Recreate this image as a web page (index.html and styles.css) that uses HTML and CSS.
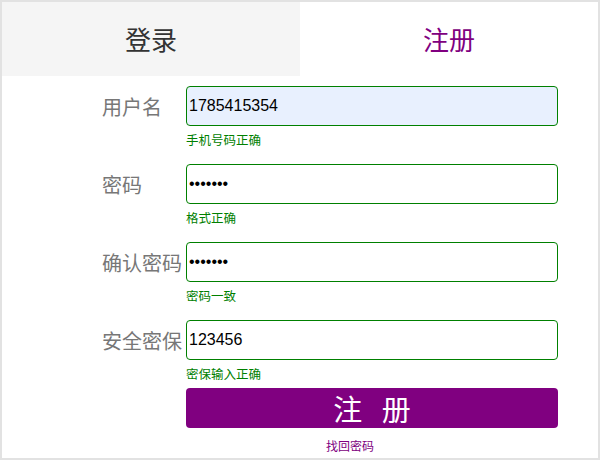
FILE: index.html
```html
<!DOCTYPE html>
<html lang="zh-CN">
<head>
<meta charset="utf-8">
<title>注册</title>
<link rel="stylesheet" href="styles.css">
</head>
<body>
<div class="box">
  <div class="tabs">
    <div class="tab tab-login">登录</div>
    <div class="tab tab-reg">注册</div>
  </div>
  <form class="form">
    <div class="group">
      <div class="row">
        <label class="label">用户名</label>
        <input class="field autofill" type="text" value="1785415354">
      </div>
      <div class="hint">手机号码正确</div>
    </div>
    <div class="group">
      <div class="row">
        <label class="label">密码</label>
        <input class="field" type="password" value="1234567">
      </div>
      <div class="hint">格式正确</div>
    </div>
    <div class="group">
      <div class="row">
        <label class="label">确认密码</label>
        <input class="field" type="password" value="1234567">
      </div>
      <div class="hint">密码一致</div>
    </div>
    <div class="group last">
      <div class="row">
        <label class="label">安全密保</label>
        <input class="field" type="text" value="123456">
      </div>
      <div class="hint">密保输入正确</div>
    </div>
    <div class="btn-row">
      <button class="btn" type="button">注 册</button>
    </div>
    <div class="find"><a class="find-link" href="#">找回密码</a></div>
  </form>
</div>
</body>
</html>
```
FILE: styles.css
```css
html, body {
  margin: 0;
  padding: 0;
  background: #fff;
}
body {
  font-family: "Noto Sans CJK SC", "Liberation Sans", sans-serif;
}
.box {
  width: 596px;
  height: 456px;
  border: 2px solid #e2e2e2;
  background: #fff;
}
.tabs {
  display: flex;
  height: 74px;
}
.tab {
  flex: 1;
  text-align: center;
  line-height: 74px;
  font-size: 26px;
}
.tab-login {
  background: #f5f5f5;
  color: #333;
}
.tab-reg {
  background: #fff;
  color: #800080;
}
.form {
  padding: 10px 0 0 100px;
  margin: 0;
}
.group {
  margin-bottom: 10px;
}
.group.last {
  margin-bottom: 0;
}
.row {
  display: flex;
  align-items: center;
  gap: 4px;
  height: 40px;
}
.label {
  width: 80px;
  font-size: 20px;
  color: #777;
  white-space: nowrap;
}
.field {
  box-sizing: border-box;
  width: 372px;
  height: 40px;
  margin: 0;
  padding: 1px 2px;
  border: 1px solid #008000;
  border-radius: 4px;
  font-family: "Liberation Sans", sans-serif;
  font-size: 16px;
  color: #000;
  background: #fff;
  outline: none;
}
.field.autofill {
  background: #e8f0fe;
}
.hint {
  padding-left: 84px;
  height: 28px;
  line-height: 28px;
  font-size: 12.5px;
  color: #008000;
}
.btn-row {
  padding-left: 84px;
}
.btn {
  display: block;
  width: 372px;
  height: 40px;
  margin: 0;
  padding: 0;
  border: none;
  border-radius: 4px;
  background: #800080;
  color: #fff;
  font-family: "Noto Sans CJK SC", sans-serif;
  font-size: 29px;
  line-height: 40px;
  word-spacing: 13px;
}
.find {
  text-align: center;
  height: 36px;
  line-height: 36px;
  font-size: 12px;
}
.find-link {
  color: #800080;
  text-decoration: none;
}
```
